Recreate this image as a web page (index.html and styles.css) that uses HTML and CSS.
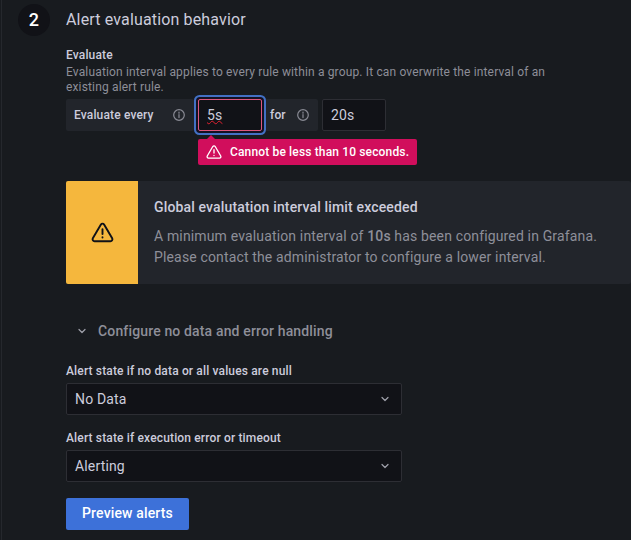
FILE: index.html
```html
<!DOCTYPE html>
<html lang="en">
<head>
<meta charset="utf-8">
<title>Alert rule</title>
<link rel="stylesheet" href="styles.css">
</head>
<body>
<main class="panel">
  <div class="step">2</div>
  <section class="content">
    <h3 class="title">Alert evaluation behavior</h3>
    <div class="label">Evaluate</div>
    <p class="description">Evaluation interval applies to every rule within a group. It can overwrite the interval of an existing alert rule.</p>
    <div class="evaluate-row">
      <div class="inline-label every">Evaluate every
        <svg class="info" viewBox="0 0 14 14"><circle cx="7" cy="7" r="5.3"/><path d="M7 6.6v3M7 4.1v1.1"/></svg>
      </div>
      <div class="input invalid"><span class="misspelled">5s</span>
        <div class="error">
          <svg class="warning" viewBox="0 0 24 24"><path d="M10.2 3.8 1.9 18a2.1 2.1 0 0 0 1.8 3.1h16.6a2.1 2.1 0 0 0 1.8-3.1L13.8 3.8a2.1 2.1 0 0 0-3.6 0zM12 8.5v5M12 17v.2"/></svg>
          <span>Cannot be less than 10 seconds.</span>
        </div>
      </div>
      <div class="inline-label for">for
        <svg class="info" viewBox="0 0 14 14"><circle cx="7" cy="7" r="5.3"/><path d="M7 6.6v3M7 4.1v1.1"/></svg>
      </div>
      <div class="input">20s</div>
    </div>
    <div class="alert">
      <div class="alert-icon">
        <svg class="warning" viewBox="0 0 24 24"><path d="M10.2 3.8 1.9 18a2.1 2.1 0 0 0 1.8 3.1h16.6a2.1 2.1 0 0 0 1.8-3.1L13.8 3.8a2.1 2.1 0 0 0-3.6 0zM12 8.5v5M12 17v.2"/></svg>
      </div>
      <div class="alert-body">
        <div class="alert-title">Global evalutation interval limit exceeded</div>
        <div class="alert-text">A minimum evaluation interval of <strong>10s</strong> has been configured in Grafana.<br>Please contact the administrator to configure a lower interval.</div>
      </div>
    </div>
    <div class="collapse">
      <svg class="chevron" viewBox="0 0 10 10"><path d="m2 3.5 3 3 3-3"/></svg>
      <span>Configure no data and error handling</span>
    </div>
    <div class="label">Alert state if no data or all values are null</div>
    <div class="select">No Data<svg class="chevron" viewBox="0 0 10 10"><path d="m2 3.5 3 3 3-3"/></svg></div>
    <div class="label">Alert state if execution error or timeout</div>
    <div class="select">Alerting<svg class="chevron" viewBox="0 0 10 10"><path d="m2 3.5 3 3 3-3"/></svg></div>
    <button class="preview">Preview alerts</button>
  </section>
</main>
</body>
</html>
```
FILE: styles.css
```css
* { box-sizing: border-box; }
body {
  margin: 0;
  height: 540px;
  overflow: hidden;
  background: #181b1f;
  color: #ccccdc;
  font: 400 14px/22px Roboto, "Liberation Sans", sans-serif;
  letter-spacing: 0.15px;
}
svg { display: block; fill: none; stroke: currentColor; stroke-linecap: round; stroke-linejoin: round; flex: none; }
.panel {
  display: flex;
  align-items: flex-start;
  height: 540px;
  margin-left: 1px;
  padding: 4px 0 0 16px;
  border-left: 1px solid #25282d;
}
.step {
  flex: none;
  width: 32px;
  height: 32px;
  margin-right: 16px;
  border-radius: 50%;
  background: #111217;
  color: #fff;
  font-size: 18px;
  font-weight: 500;
  line-height: 32px;
  text-align: center;
}
.content { flex: 1; min-width: 0; }
.title { margin: 5px 0 17px; font-size: 16px; font-weight: 400; line-height: 22px; }
.label { font-size: 12px; font-weight: 500; line-height: 15px; }
.description { width: 500px; margin: 2px 0 4px; color: #8d8e98; font-size: 12px; line-height: 15px; }
.evaluate-row { display: flex; height: 32px; }
.inline-label {
  display: flex;
  align-items: center;
  justify-content: space-between;
  height: 32px;
  margin-right: 4px;
  padding: 0 8px;
  border-radius: 2px;
  background: #22252b;
  font-size: 12px;
  font-weight: 500;
}
.every { width: 128px; }
.for { width: 56px; }
.info { width: 14px; height: 14px; color: #898a94; stroke-width: 1.2; }
.input {
  position: relative;
  width: 64px;
  height: 32px;
  padding: 0 8px;
  border: 1px solid #2d2e34;
  border-radius: 2px;
  background: #111217;
  line-height: 30px;
}
.invalid { border-color: #dc577f; box-shadow: 0 0 0 2px #141122, 0 0 0 4px #4270c4; z-index: 1; }
.misspelled { text-decoration: underline wavy #e0202f 1px; text-underline-offset: 0; text-decoration-skip-ink: none; }
.error {
  position: absolute;
  top: 39px;
  left: -1px;
  display: flex;
  align-items: center;
  gap: 8px;
  height: 26px;
  padding: 0 8px;
  border-radius: 2px;
  background: #d10e5c;
  color: #fff;
  font-size: 12px;
  font-weight: 500;
  white-space: nowrap;
}
.error::before { content: ""; position: absolute; left: 9px; top: -4px; border: 4px solid transparent; border-top: 0; border-bottom-color: #d10e5c; }
.error .warning { width: 16px; height: 16px; stroke-width: 2; }
.alert { display: flex; height: 103px; margin-top: 50px; border-radius: 2px; background: #22252b; overflow: hidden; }
.alert-icon { display: flex; align-items: center; justify-content: center; width: 72px; background: #f5b73d; color: #111217; }
.alert-icon .warning { width: 23px; height: 23px; stroke-width: 2; }
.alert-body { padding: 15px 16px; white-space: nowrap; }
.alert-title { font-weight: 500; }
.alert-text { margin-top: 8px; color: #8e8f99; line-height: 21px; }
.alert-text strong { font-weight: 500; }
.collapse { display: flex; align-items: center; gap: 11px; height: 22px; margin: 36px 0 22px 11px; color: #8e8f99; font-weight: 500; }
.chevron { width: 10px; height: 10px; stroke-width: 1.2; color: #a0a1ab; }
.select {
  display: flex;
  align-items: center;
  justify-content: space-between;
  width: 336px;
  height: 32px;
  margin: 4px 0 16px;
  padding: 0 11px 0 8px;
  border: 1px solid #2d2e34;
  border-radius: 2px;
  background: #111217;
}
.preview {
  display: block;
  width: 123px;
  height: 32px;
  padding: 0 0 2px;
  border: 0;
  border-radius: 2px;
  background: #3d71d9;
  color: #fff;
  font: 500 14px/30px Roboto, "Liberation Sans", sans-serif;
  letter-spacing: 0.15px;
}
```
